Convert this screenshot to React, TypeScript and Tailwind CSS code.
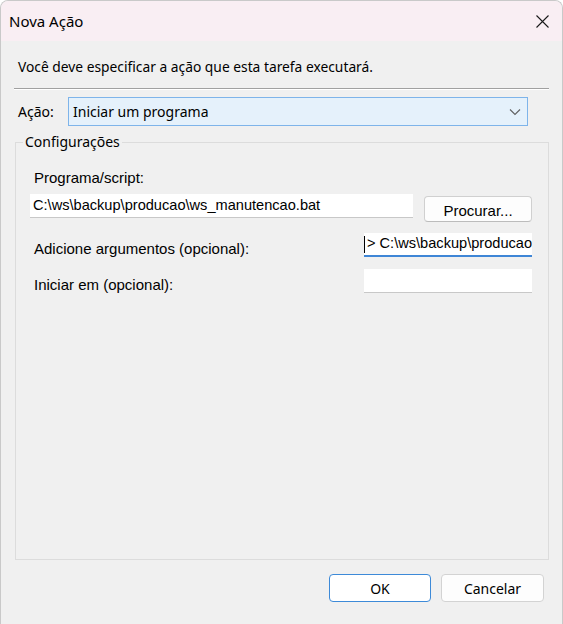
import React from 'react';

const ui = "font-['Noto_Sans',sans-serif]";
const classic = "font-['Liberation_Sans',Arial,sans-serif]";

function Chevron() {
  return (
    <svg width="12" height="8" viewBox="0 0 12 8" fill="none">
      <path d="M1 1.5 L6 6.5 L11 1.5" stroke="#606060" strokeWidth="1.1" />
    </svg>
  );
}

function CloseIcon() {
  return (
    <svg width="13" height="13" viewBox="0 0 13 13" fill="none">
      <path d="M0.5 0.5 L12.5 12.5 M12.5 0.5 L0.5 12.5" stroke="#1a1a1a" strokeWidth="1.1" />
    </svg>
  );
}

export default function App() {
  return (
    <div className={`w-[563px] h-[624px] bg-[#f0f0f0] rounded-t-[8px] border-t border-x border-[#c9c9c9] overflow-hidden text-black ${ui}`}>
      {/* Title bar */}
      <div className="h-[40px] bg-[#f9eef3] flex items-center justify-between pl-[8px] pr-[13px]">
        <span className="text-[15px]">Nova Ação</span>
        <CloseIcon />
      </div>

      {/* Intro */}
      <p className="mt-[16px] pl-[17px] text-[13.8px] leading-[20px]">Você deve especificar a ação que esta tarefa executará.</p>
      <div className="mt-[11px] ml-[13px] w-[535px] border-t border-[#a0a0a0] border-b border-b-white" />

      {/* Ação */}
      <div className="mt-[7px] flex items-center pl-[17px]">
        <span className="w-[50px] text-[14px]">Ação:</span>
        <div className="w-[460px] h-[29px] bg-[#e5f1fb] border border-[#7eb4ea] flex items-center justify-between pl-[4px] pr-[6px]">
          <span className="text-[14px]">Iniciar um programa</span>
          <Chevron />
        </div>
      </div>

      {/* Configurações */}
      <fieldset className="mt-[6px] ml-[14px] w-[534px] h-[428px] border border-[#dcdcdc]">
        <legend className="ml-[7px] px-[2px] text-[14px] leading-[20px]">Configurações</legend>

        <div className={`pl-[14px] pr-[15px] ${classic}`}>
          <div className="mt-[17px] pl-[4px] text-[15px] leading-[18px]">Programa/script:</div>
          <div className="mt-[7px] flex items-start gap-[11px]">
            <div className="w-[383px] h-[24px] bg-white border-b border-[#c8c8c8] flex items-center pl-[3px] text-[14.6px] whitespace-nowrap">
              C:\ws\backup\producao\ws_manutencao.bat
            </div>
            <button className="mt-[2px] w-[108px] h-[26px] bg-[#fdfdfd] border border-[#d0d0d0] border-b-[#bcbcbc] rounded-[4px] text-[15px] pt-[3px]">
              Procurar...
            </button>
          </div>

          <div className="mt-[11px] flex items-start justify-between pr-[1px]">
            <span className="pl-[4px] pt-[7px] text-[15px] leading-[18px]">Adicione argumentos (opcional):</span>
            <div className="w-[168px] h-[24px] bg-white border-b-2 border-[#3f86d6] flex items-center overflow-hidden whitespace-nowrap">
              <div className="w-px h-[17px] bg-black shrink-0" />
              <span className="ml-[2px] text-[14.6px]">&gt; C:\ws\backup\producao</span>
            </div>
          </div>

          <div className="mt-[11px] flex items-start justify-between pr-[1px]">
            <span className="pl-[4px] pt-[7px] text-[15px] leading-[18px]">Iniciar em (opcional):</span>
            <div className="w-[168px] h-[24px] bg-white border-b border-[#c8c8c8]" />
          </div>
        </div>
      </fieldset>

      {/* Buttons */}
      <div className="mt-[14px] flex justify-end gap-[10px] pr-[18px]">
        <button className="w-[102px] h-[28px] bg-white border border-[#3d8ad8] rounded-[4px] text-[14px]">OK</button>
        <button className="w-[103px] h-[28px] bg-[#fdfdfd] border border-[#d3d3d3] rounded-[4px] text-[14px]">Cancelar</button>
      </div>
    </div>
  );
}
